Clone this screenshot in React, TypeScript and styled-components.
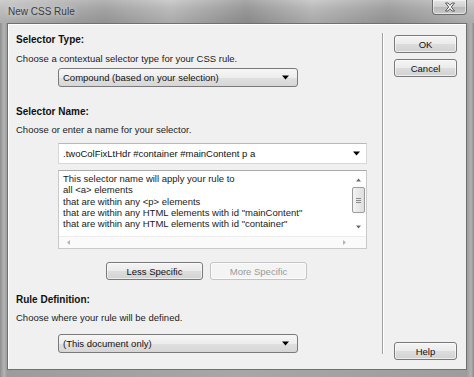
import React, { FC } from "react";
import styled, { createGlobalStyle } from "styled-components";

const GlobalStyle = createGlobalStyle`
  html, body {
    margin: 0;
    padding: 0;
    background: #9a9a9a;
  }
  body {
    font-family: "Liberation Sans", Arial, sans-serif;
  }
`;

const Window = styled.div`
  width: 474px;
  height: 377px;
  box-sizing: border-box;
  display: flex;
  flex-direction: column;
  padding: 0 7px 7px 7px;
  background: linear-gradient(90deg, #8e8e8e 0px, #b5b5b5 4px, #9c9c9c 7px, #a7a7a7 50%, #9d9d9d calc(100% - 7px), #b2b2b2 calc(100% - 3px), #8a8a8a 100%);
`;

const TitleBar = styled.div`
  display: flex;
  align-items: flex-start;
  height: 23px;
  margin: 0 -7px;
  background:
    linear-gradient(90deg, rgba(255, 255, 255, 0.12) 0%, rgba(0, 0, 0, 0.1) 22%, rgba(255, 255, 255, 0.08) 36%, rgba(0, 0, 0, 0.16) 52%, rgba(255, 255, 255, 0.06) 66%, rgba(0, 0, 0, 0.12) 82%, rgba(255, 255, 255, 0.1) 100%),
    linear-gradient(180deg, #c8c8c8 0%, #b6b6b6 35%, #a2a2a2 100%);
`;

const Title = styled.div`
  margin: 6px 0 0 8px;
  font-size: 10px;
  line-height: 12px;
  color: #3c3c3c;
  text-shadow: 0 0 6px rgba(255, 255, 255, 0.9);
`;

const CloseButton = styled.div`
  display: flex;
  align-items: center;
  justify-content: center;
  width: 35px;
  height: 15px;
  box-sizing: border-box;
  margin-left: auto;
  margin-right: 7px;
  border: 1px solid #6c6c6c;
  border-top: none;
  border-radius: 0 0 4px 4px;
  background: linear-gradient(180deg, #e4e4e4 0%, #cfcfcf 50%, #b9b9b9 51%, #c9c9c9 100%);
  box-shadow: inset 0 0 0 1px rgba(255, 255, 255, 0.5);
`;

const Client = styled.div`
  flex: 1;
  display: flex;
  border: 1px solid #707070;
  background: #f0f0f0;
  box-shadow: inset 1px 1px 0 #ffffff;
`;

const MainCol = styled.div`
  width: 374px;
  box-sizing: border-box;
  padding: 9px 0 0 8px;
  display: flex;
  flex-direction: column;
`;

const Separator = styled.div`
  width: 0;
  border-left: 1px solid #a0a0a0;
  border-right: 1px solid #ffffff;
  margin: 9px 0 15px 0;
`;

const SideCol = styled.div`
  flex: 1;
  display: flex;
  flex-direction: column;
  gap: 6px;
  padding: 11px 0 9px 10px;
`;

const Heading = styled.div<{ $mt?: number }>`
  margin-top: ${(p) => p.$mt ?? 0}px;
  font-size: 10px;
  font-weight: 700;
  line-height: 14px;
  color: #111;
`;

const Hint = styled.div<{ $mt?: number }>`
  margin-top: ${(p) => p.$mt ?? 0}px;
  font-size: 9.5px;
  line-height: 14px;
  color: #1b1b1b;
`;

const Select = styled.div<{ $mt?: number }>`
  display: flex;
  align-items: center;
  width: 240px;
  height: 19px;
  box-sizing: border-box;
  margin: ${(p) => p.$mt ?? 0}px 0 0 42px;
  padding: 0 8px 0 4px;
  border: 1px solid #7a7a7a;
  border-radius: 3px;
  background: linear-gradient(180deg, #f6f6f6 0%, #ededed 50%, #e0e0e0 51%, #d6d6d6 100%);
  font-size: 9.5px;
  color: #111;
`;

const Combo = styled.div<{ $mt?: number }>`
  display: flex;
  align-items: center;
  width: 309px;
  height: 21px;
  box-sizing: border-box;
  margin: ${(p) => p.$mt ?? 0}px 0 0 42px;
  padding: 0 6px 0 4px;
  border: 1px solid #d8d8d8;
  border-top-color: #b9b9b9;
  background: #ffffff;
  font-size: 9.5px;
  color: #111;
`;

const Value = styled.span`
  flex: 1;
  white-space: nowrap;
`;

const TextBox = styled.div<{ $mt?: number }>`
  display: grid;
  grid-template-columns: 1fr 16px;
  grid-template-rows: 1fr 12px;
  width: 309px;
  height: 79px;
  box-sizing: border-box;
  margin: ${(p) => p.$mt ?? 0}px 0 0 42px;
  border: 1px solid #c9c9c9;
  border-top-color: #aaaaaa;
  background: #ffffff;
`;

const TextLines = styled.div`
  padding: 2px 0 0 4px;
  font-size: 9.5px;
  line-height: 11.3px;
  color: #1a1a1a;
  white-space: nowrap;
  overflow: hidden;
`;

const VScroll = styled.div`
  display: flex;
  flex-direction: column;
  align-items: center;
  padding: 7px 0 0 1px;
`;

const Thumb = styled.div`
  display: flex;
  align-items: center;
  justify-content: center;
  width: 11px;
  height: 24px;
  margin: 5px 0 12px;
  border: 1px solid #9a9a9a;
  border-radius: 2px;
  background: linear-gradient(90deg, #f3f3f3, #dedede);
`;

const HScroll = styled.div`
  grid-column: 1 / span 2;
  display: flex;
  align-items: center;
  justify-content: space-between;
  padding: 0 20px 0 8px;
  border-top: 1px solid #ececec;
  background: #fafafa;
`;

const ButtonRow = styled.div<{ $mt?: number }>`
  display: flex;
  gap: 7px;
  margin: ${(p) => p.$mt ?? 0}px 0 0 90px;
`;

const Button = styled.div<{ $w?: number; $disabled?: boolean }>`
  display: flex;
  align-items: center;
  justify-content: center;
  width: ${(p) => p.$w ?? 63}px;
  height: 18px;
  box-sizing: border-box;
  border: 1px solid ${(p) => (p.$disabled ? "#c2c4c6" : "#7a7a7a")};
  border-radius: 3px;
  background: ${(p) =>
    p.$disabled
      ? "#f4f4f4"
      : "linear-gradient(180deg, #f4f4f4 0%, #ebebeb 50%, #dddddd 51%, #d2d2d2 100%)"};
  box-shadow: inset 0 0 0 1px rgba(255, 255, 255, 0.6);
  font-size: 9.5px;
  color: ${(p) => (p.$disabled ? "#9a9a9a" : "#111")};
`;

const HelpButton = styled(Button)`
  margin-top: auto;
`;

const Arrow: FC<{ up?: boolean; color?: string; w?: number }> = ({ up, color = "#000", w = 7 }) => (
  <svg width={w} height={Math.ceil(w / 2) + 1} viewBox="0 0 7 4">
    <path d={up ? "M0 4 L3.5 0 L7 4 Z" : "M0 0 L7 0 L3.5 4 Z"} fill={color} />
  </svg>
);

const lines = [
  "This selector name will apply your rule to",
  "all <a> elements",
  "that are within any <p> elements",
  'that are within any HTML elements with id "mainContent"',
  'that are within any HTML elements with id "container"',
];

const App: FC = () => {
  return (
    <>
      <GlobalStyle />
      <Window>
        <TitleBar>
          <Title>New CSS Rule</Title>
          <CloseButton>
            <svg width="12" height="10" viewBox="0 0 12 10">
              <path
                d="M1.5 1 L4 1 L6 3.3 L8 1 L10.5 1 L7.3 5 L10.5 9 L8 9 L6 6.7 L4 9 L1.5 9 L4.7 5 Z"
                fill="#ffffff"
                stroke="#4a4a4a"
                strokeWidth="0.9"
                strokeLinejoin="round"
              />
            </svg>
          </CloseButton>
        </TitleBar>
        <Client>
          <MainCol>
            <Heading>Selector Type:</Heading>
            <Hint $mt={5}>Choose a contextual selector type for your CSS rule.</Hint>
            <Select $mt={2}>
              <Value>Compound (based on your selection)</Value>
              <Arrow />
            </Select>

            <Heading $mt={18}>Selector Name:</Heading>
            <Hint $mt={4}>Choose or enter a name for your selector.</Hint>
            <Combo $mt={6}>
              <Value>.twoColFixLtHdr #container #mainContent p a</Value>
              <Arrow />
            </Combo>
            <TextBox $mt={6}>
              <TextLines>
                {lines.map((l, i) => (
                  <div key={i}>{l}</div>
                ))}
              </TextLines>
              <VScroll>
                <Arrow up w={5} color="#6a6a6a" />
                <Thumb>
                  <svg width="5" height="5" viewBox="0 0 5 5">
                    <path d="M0 0.5 H5 M0 2.5 H5 M0 4.5 H5" stroke="#8a8a8a" strokeWidth="1" />
                  </svg>
                </Thumb>
                <Arrow w={5} color="#6a6a6a" />
              </VScroll>
              <HScroll>
                <svg width="3" height="5" viewBox="0 0 3 5">
                  <path d="M3 0 L0 2.5 L3 5 Z" fill="#b5b5b5" />
                </svg>
                <svg width="3" height="5" viewBox="0 0 3 5">
                  <path d="M0 0 L3 2.5 L0 5 Z" fill="#b5b5b5" />
                </svg>
              </HScroll>
            </TextBox>
            <ButtonRow $mt={13}>
              <Button $w={97}>Less Specific</Button>
              <Button $w={97} $disabled>
                More Specific
              </Button>
            </ButtonRow>

            <Heading $mt={13}>Rule Definition:</Heading>
            <Hint $mt={4}>Choose where your rule will be defined.</Hint>
            <Select $mt={9}>
              <Value>(This document only)</Value>
              <Arrow />
            </Select>
          </MainCol>
          <Separator />
          <SideCol>
            <Button>OK</Button>
            <Button>Cancel</Button>
            <HelpButton>Help</HelpButton>
          </SideCol>
        </Client>
      </Window>
    </>
  );
};

export default App;
